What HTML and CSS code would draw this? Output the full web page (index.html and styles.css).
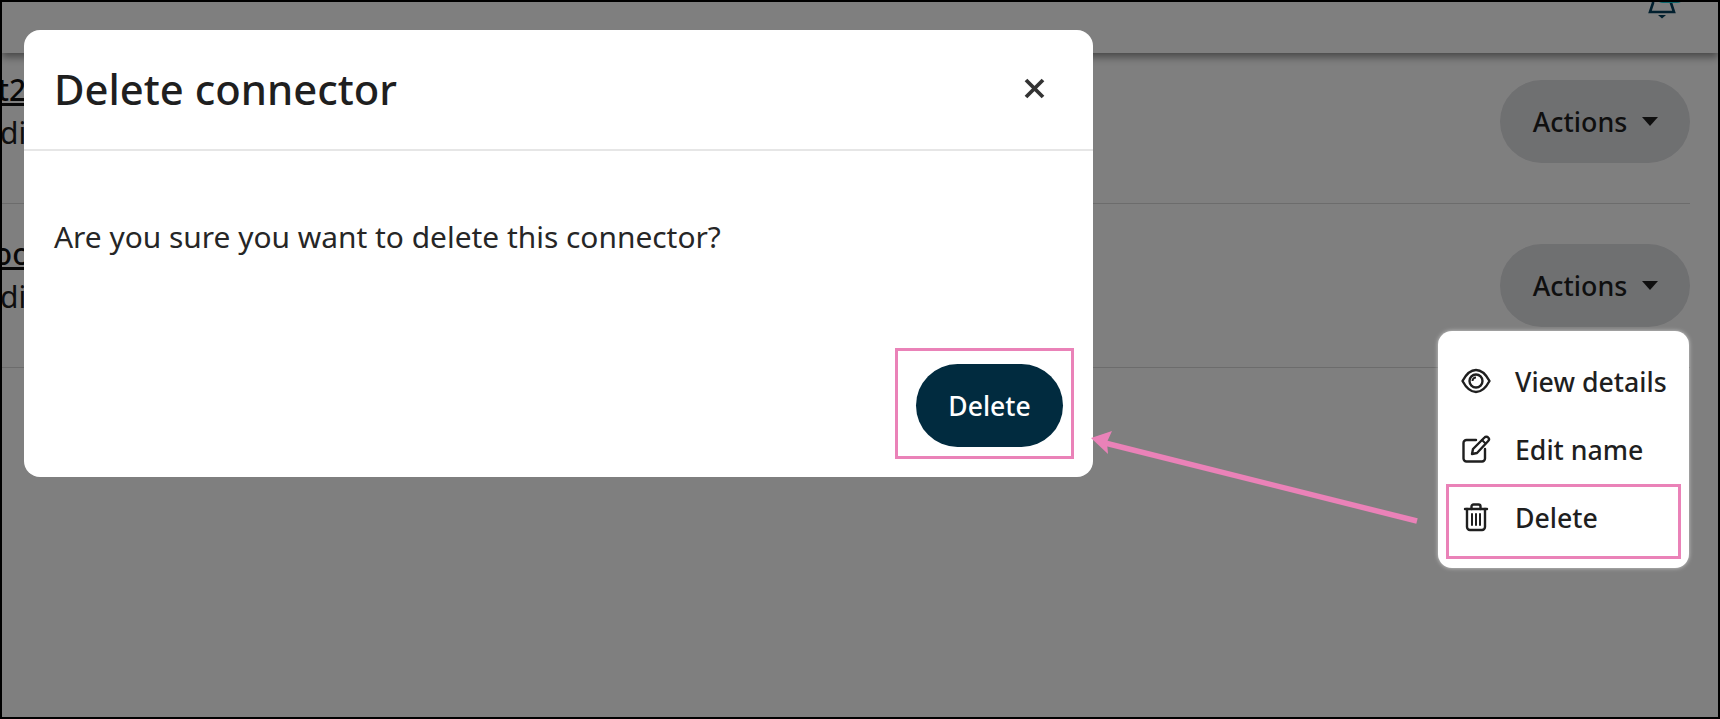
FILE: index.html
```html
<!DOCTYPE html>
<html lang="en">
<head>
<meta charset="utf-8">
<title>Delete connector</title>
<link rel="stylesheet" href="styles.css">
</head>
<body>
<div class="frame">
  <header class="topbar">
    <div class="bell">
      <svg class="bell-icon" viewBox="0 0 38 40" width="38" height="40" fill="none" stroke="#023f5c" stroke-width="2.600"><path d="M15 3c-6 0-9 4-9 10v5L3 27h24l-3-9v-5c0-6-3-10-9-10z"/><path d="M11 30h8l-4 3.500z" fill="#023f5c" stroke="none"/></svg>
      <span class="bell-badge"></span>
    </div>
  </header>
  <main class="list">
    <section class="row row-first">
      <div class="info">
        <a class="name name-a">Test2</a>
        <p class="status">disabled</p>
      </div>
      <button class="actions">Actions <span class="caret"></span></button>
    </section>
    <section class="row">
      <div class="info">
        <a class="name name-b">Google</a>
        <p class="status">disabled</p>
      </div>
      <button class="actions">Actions <span class="caret"></span></button>
    </section>
  </main>
  <div class="backdrop">
    <div class="modal">
      <div class="modal-head">
        <h2 class="modal-title">Delete connector</h2>
        <svg class="close" viewBox="0 0 21 21" width="21" height="21" fill="none" stroke="#333" stroke-width="3.800"><path d="M2 2l17 17M19 2L2 19"/></svg>
      </div>
      <p class="modal-body">Are you sure you want to delete this connector?</p>
      <div class="modal-foot">
        <button class="danger">Delete</button>
      </div>
    </div>
  </div>
  <ul class="menu">
    <li class="menu-item">
      <svg class="menu-icon" viewBox="0 0 30 30" fill="none" stroke="#1f1f1f" stroke-width="2.400" stroke-linejoin="round"><path d="M1.500 15C5 8.500 9.500 4 15 4S25 8.500 28.500 15C25 21.500 20.500 26 15 26S5 21.500 1.500 15z"/><circle cx="15" cy="15" r="6.500"/><path d="M11.500 15a3.500 3.500 0 0 1 3.500-3.500" stroke-width="2"/></svg>
      View details
    </li>
    <li class="menu-item">
      <svg class="menu-icon" viewBox="0 0 30 30" fill="none" stroke="#1f1f1f" stroke-width="2.400" stroke-linecap="round" stroke-linejoin="round"><path d="M15 6H5.500A3 3 0 0 0 2.500 9v15.500a3 3 0 0 0 3 3H21a3 3 0 0 0 3-3V15"/><path d="M11 20l1-5L23.500 3.500a2.500 2.500 0 0 1 3.700 0 2.500 2.500 0 0 1 0 3.500L16 19z"/><path d="M21 6l3.500 3.500" stroke-width="2"/></svg>
      Edit name
    </li>
    <li class="menu-item">
      <svg class="menu-icon" viewBox="0 0 30 30" fill="none" stroke="#1f1f1f" stroke-width="2.400" stroke-linecap="round" stroke-linejoin="round"><path d="M4 7h22"/><path d="M10.500 7V4.500a2 2 0 0 1 2-2h5a2 2 0 0 1 2 2V7"/><path d="M6 7v18a3 3 0 0 0 3 3h12a3 3 0 0 0 3-3V7"/><path d="M11 12v11M15 12v11M19 12v11" stroke-width="2"/></svg>
      Delete
    </li>
  </ul>
  <span class="mark mark-modal"></span>
  <span class="mark mark-menu"></span>
  <svg class="arrow" viewBox="0 0 1720 719" width="1720" height="719" fill="none"><path d="M1417 521L1101 442" stroke="#ea82b8" stroke-width="5.500"/><path d="M1091 438l21-7-5 11 1 12z" fill="#ea82b8"/></svg>
</div>
</body>
</html>
```

FILE: styles.css
```css
* { box-sizing: border-box; }
html, body { margin: 0; padding: 0; }
body { font-family: "Noto Sans", sans-serif; color: #1f1f1f; background: #fff; }
.frame { position: relative; width: 1720px; height: 719px; border: 2px solid #000; overflow: hidden; background: #fff; }

.topbar { height: 51px; display: flex; justify-content: flex-end; align-items: flex-end; padding: 0 33px 28px 0; box-shadow: 0 4px 8px rgba(0,0,0,.45); background: #fff; position: relative; }
.bell { position: relative; width: 38px; height: 40px; flex: none; }
.bell-icon { display: block; }
.bell-badge { position: absolute; left: 8px; top: 10px; width: 30px; height: 8px; background: #14ccd8; border-radius: 0 0 8px 8px; }

.row { display: flex; justify-content: space-between; align-items: flex-start; margin-right: 28px; padding: 40px 0; border-bottom: 1.500px solid #d9d9d9; }
.row-first { padding-top: 27px; }
.info { font-size: 30px; line-height: 43px; white-space: nowrap; margin-top: -12px; }
.name { color: #111; font-weight: 500; text-decoration: underline; display: block; }
.name-a { margin-left: -51px; }
.name-b { margin-left: -30px; }
.status { margin: 0 0 0 -2px; }
.actions { display: flex; align-items: center; gap: 15px; width: 190px; height: 83px; padding-left: 7px; justify-content: center; border: none; border-radius: 42px; background: #dfe0e3; font: 500 26.800px "Noto Sans", sans-serif; color: #1f1f1f; }
.caret { width: 0; height: 0; border-left: 8px solid transparent; border-right: 8px solid transparent; border-top: 9px solid #1f1f1f; }

.backdrop { position: absolute; inset: 0; background: rgba(0,0,0,.5); padding: 28px 0 0 22px; }
.modal { width: 1069px; height: 447px; background: #fff; border-radius: 16px; display: flex; flex-direction: column; }
.modal-head { height: 121px; flex: none; display: flex; align-items: center; justify-content: space-between; padding: 0 48px 3px 30px; border-bottom: 2px solid #e6e6e6; }
.modal-title { margin: 0; font-size: 41.800px; font-weight: 500; color: #1f1f1f; }
.close { flex: none; }
.modal-body { margin: 0; padding: 66px 30px 0; font-size: 29.900px; line-height: 40px; flex: 1; color: #262626; }
.modal-foot { display: flex; justify-content: flex-end; padding: 0 30px 30px; }
.danger { width: 147px; height: 83px; border: none; border-radius: 42px; background: #012b3f; color: #fff; font: 500 26.500px "Noto Sans", sans-serif; }

.menu { position: absolute; left: 1436px; top: 329px; width: 251px; height: 237px; margin: 0; padding: 16px 0 0; list-style: none; background: #fff; border-radius: 14px; box-shadow: 0 0 4px rgba(255,255,255,.6); }
.menu-item { display: flex; align-items: center; gap: 24px; height: 68px; padding-left: 23px; font-size: 26.700px; font-weight: 500; color: #1f1f1f; }
.menu-icon { width: 30px; height: 30px; flex: none; }

.mark { position: absolute; border: 3px solid #ea82b8; }
.mark-modal { left: 893px; top: 346px; width: 179px; height: 111px; }
.mark-menu { left: 1444px; top: 482px; width: 235px; height: 75px; }
.arrow { position: absolute; left: -2px; top: -2px; pointer-events: none; }
```
